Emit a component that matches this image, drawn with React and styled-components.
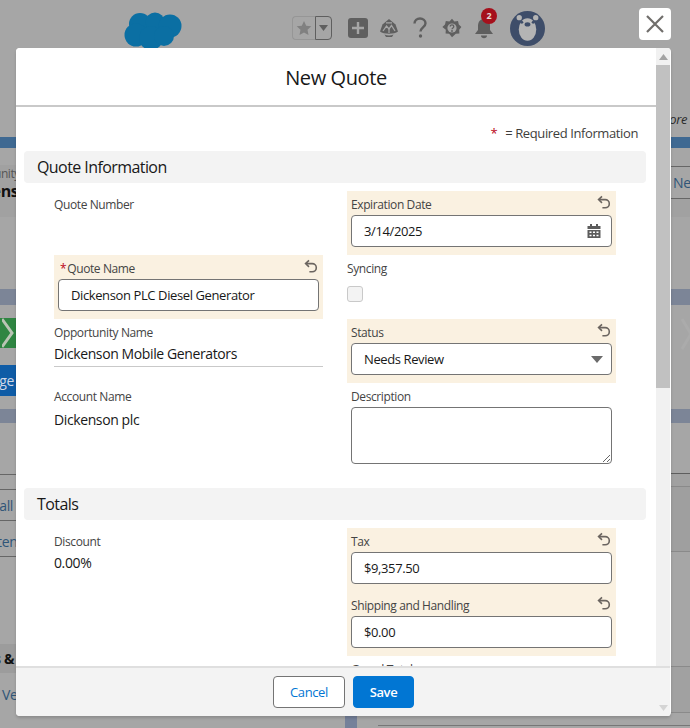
import React from "react";
import styled, { createGlobalStyle } from "styled-components";

const GlobalStyle = createGlobalStyle`
  html, body {
    margin: 0;
    padding: 0;
    height: 100%;
    overflow: hidden;
    font-family: "Open Sans", "Noto Sans", Arial, sans-serif;
    font-size: 13px;
    letter-spacing: -0.03em;
    color: #181818;
  }
  * {
    box-sizing: border-box;
  }
`;

const Page = styled.div`
  position: relative;
  width: 690px;
  height: 728px;
  overflow: hidden;
  background: #a6a6a6;
  display: flex;
  flex-direction: column;
`;

const TopBar = styled.header`
  height: 137px;
  display: flex;
  align-items: flex-start;
  padding: 10px 3px 0 124px;
`;

const LogoMark = styled.svg`
  width: 58px;
  height: 42px;
  flex: none;
`;

const Tools = styled.div`
  display: flex;
  align-items: center;
  margin-left: 110px;
  height: 36px;
`;

const FavoriteGroup = styled.div`
  display: flex;
  width: 40px;
  height: 24px;
  margin-right: 16px;
`;

const FavoriteStar = styled.div`
  width: 23px;
  display: flex;
  align-items: center;
  justify-content: center;
  border: 1px solid #969696;
  border-right: none;
  border-radius: 4px 0 0 4px;
`;

const FavoriteCaret = styled.div`
  width: 17px;
  display: flex;
  align-items: center;
  justify-content: center;
  border: 1px solid #5f5f5f;
  border-radius: 0 4px 4px 0;
`;

const ToolIcon = styled.svg`
  flex: none;
  margin-right: ${(p) => p.$gap}px;
`;

const BellWrap = styled.div`
  position: relative;
  width: 22px;
  height: 24px;
  margin-right: 15px;
`;

const Badge = styled.span`
  position: absolute;
  top: -8px;
  left: 8px;
  width: 16px;
  height: 16px;
  border-radius: 50%;
  background: #a5101c;
  color: #e6d6d6;
  font-size: 9px;
  font-weight: 700;
  line-height: 16px;
  text-align: center;
`;

const MoreLink = styled.span`
  margin-left: auto;
  margin-top: 100px;
  font-style: italic;
  color: #2b2b2b;
  font-size: 13px;
`;

const BlueStrip = styled.div`
  height: 11px;
  flex: none;
  background: #3f6992;
`;

const Columns = styled.div`
  flex: 1;
  display: flex;
  justify-content: space-between;
  min-height: 0;
`;

const Rail = styled.div`
  width: ${(p) => p.$width}px;
  display: flex;
  flex-direction: column;
  overflow: hidden;
`;

const Band = styled.div`
  flex: none;
  height: ${(p) => p.$h}px;
  background: ${(p) => p.$bg || "transparent"};
  border-bottom: ${(p) => (p.$line ? `1px solid ${p.$line}` : "none")};
  color: ${(p) => p.$color || "#2f5578"};
  font-weight: ${(p) => p.$weight || 400};
  font-size: ${(p) => p.$size || 14}px;
  line-height: ${(p) => p.$h}px;
  white-space: nowrap;
  display: flex;
  justify-content: ${(p) => (p.$start ? "flex-start" : "flex-end")};
  padding: ${(p) => (p.$start ? "0 0 0 2px" : `0 ${p.$pr || 0}px 0 0`)};
  overflow: hidden;
`;

const Chevron = styled.svg`
  flex: none;
  width: 19px;
  height: ${(p) => p.$h}px;
`;

const BottomStrip = styled.div`
  flex: none;
  height: 12px;
  display: flex;
  overflow: hidden;
`;

const CutOffText = styled.div`
  width: 345px;
  padding: 7px 0 0 5px;
  font-size: 14px;
  color: #222;
  white-space: nowrap;
`;

const Divider = styled.div`
  width: 12px;
  background: #75819a;
`;

const BottomRule = styled.div`
  flex: 1;
  margin: 9px 0 0 21px;
  border-top: 1px solid #777;
`;

const CloseButton = styled.button`
  position: absolute;
  top: 8px;
  left: 639px;
  width: 32px;
  height: 32px;
  padding: 0;
  border: none;
  border-radius: 4px;
  background: #fff;
  display: flex;
  align-items: center;
  justify-content: center;
`;

const Modal = styled.div`
  position: absolute;
  top: 48px;
  left: 16px;
  width: 655px;
  height: 668px;
  padding-right: 1px;
  border-radius: 4px;
  background: #fff;
  box-shadow: 0 2px 3px rgba(0, 0, 0, 0.16);
  overflow: hidden;
  display: flex;
`;

const Pane = styled.div`
  width: 640px;
  flex: none;
  display: flex;
  flex-direction: column;
`;

const ScrollTrack = styled.div`
  flex: 1;
  display: flex;
  flex-direction: column;
  background: #f1f1f1;
`;

const ScrollButton = styled.div`
  height: 17px;
  flex: none;
  display: flex;
  align-items: center;
  justify-content: center;
`;

const ScrollThumb = styled.div`
  height: 323px;
  flex: none;
  background: #c1c1c1;
`;

const ScrollFoot = styled.div`
  margin-top: auto;
  height: 50px;
  flex: none;
  display: flex;
  flex-direction: column;
  justify-content: flex-end;
  background: #f3f3f3;
  border-top: 2px solid #dfdfdf;
`;

const ModalHeader = styled.div`
  height: 59px;
  flex: none;
  background: #fff;
  border-bottom: 2px solid #c9c9c9;
  text-align: center;
  font-size: 20px;
  line-height: 59px;
`;

const ModalBody = styled.div`
  flex: 1;
  min-height: 0;
  overflow: hidden;
  padding: 16px 10px 0 8px;
`;

const RequiredNote = styled.div`
  height: 28px;
  padding-right: 8px;
  text-align: right;
  line-height: 20px;
  color: #3e3e3c;
`;

const Star = styled.span`
  color: #ba0517;
  margin-right: ${(p) => p.$gap || 1}px;
`;

const SectionTitle = styled.h3`
  margin: 0 0 8px;
  height: 32px;
  padding-left: 13px;
  border-radius: 4px;
  background: #f3f3f3;
  font-size: 16px;
  font-weight: 400;
  letter-spacing: -0.036em;
  line-height: 32px;
`;

const FieldGrid = styled.div`
  display: grid;
  grid-template-columns: 269px 269px;
  column-gap: 24px;
  padding-left: 30px;
  margin-bottom: ${(p) => p.$mb || 0}px;
`;

const Field = styled.div`
  min-height: 64px;
  position: relative;
  padding: ${(p) => (p.$edited ? "0 4px 8px" : "0 4px")};
  background: ${(p) => (p.$edited ? "#faf1e1" : "transparent")};
`;

const PlainField = styled.div`
  min-height: 64px;
`;

const Label = styled.div`
  height: 24px;
  font-size: 12px;
  line-height: 27px;
  color: #444;
  padding-left: ${(p) => p.$indent || 0}px;
`;

const UndoIcon = styled.svg`
  position: absolute;
  top: 4px;
  right: 4px;
  width: 16px;
  height: 16px;
`;

const Value = styled.div`
  height: ${(p) => (p.$underline ? 24 : 27)}px;
  line-height: ${(p) => p.$lh || 22}px;
  font-size: 14px;
  color: #181818;
  border-bottom: ${(p) => (p.$underline ? "1px solid #c9c9c9" : "none")};
`;

const InputBox = styled.div`
  position: relative;
  height: 32px;
`;

const TextInput = styled.input`
  width: 100%;
  height: 32px;
  padding: 0 12px;
  border: 1px solid #747474;
  border-radius: 4px;
  background: #fff;
  font: inherit;
  font-size: 13px;
  letter-spacing: inherit;
  color: #181818;
  outline: none;
`;

const CalendarIcon = styled.svg`
  position: absolute;
  top: 9px;
  right: 11px;
`;

const CaretIcon = styled.svg`
  position: absolute;
  top: 13px;
  right: 9px;
`;

const Check = styled.div`
  width: 16px;
  height: 16px;
  margin-top: 7px;
  border: 1px solid #c9c9c9;
  border-radius: 3px;
  background: #f3f3f3;
`;

const TextArea = styled.textarea`
  display: block;
  width: 100%;
  height: 57px;
  padding: 6px 12px;
  border: 1px solid #747474;
  border-radius: 4px;
  font: inherit;
  outline: none;
`;

const ModalFooter = styled.div`
  flex: none;
  height: 50px;
  padding: 8px 0 0 15px;
  display: flex;
  justify-content: center;
  gap: 8px;
  background: #f3f3f3;
  border-top: 2px solid #dfdfdf;
`;

const Button = styled.button`
  height: 32px;
  width: ${(p) => p.$width}px;
  padding: 0;
  border-radius: 4px;
  border: 1px solid ${(p) => (p.$primary ? "#0176d3" : "#747474")};
  background: ${(p) => (p.$primary ? "#0176d3" : "#fff")};
  color: ${(p) => (p.$primary ? "#fff" : "#0176d3")};
  font-family: inherit;
  font-size: 13px;
  letter-spacing: inherit;
  font-weight: ${(p) => (p.$primary ? 600 : 400)};
`;

function Undo() {
  return (
    <UndoIcon viewBox="0 0 16 16" fill="none" stroke="#6b6560" strokeWidth="1.6">
      <path d="M3 4.6h6.2a4 4 0 0 1 0 8.2H6.4" />
      <path d="M6 1.4 2.6 4.6 6 7.8" />
    </UndoIcon>
  );
}

function EditedField({ label, value, required, children }) {
  return (
    <Field $edited>
      <Label $indent={required ? 2 : 0}>
        {required && <Star>*</Star>}
        {label}
      </Label>
      <Undo />
      <InputBox>
        <TextInput readOnly value={value} />
        {children}
      </InputBox>
    </Field>
  );
}

function TrailIcon() {
  return (
    <ToolIcon width="20" height="20" viewBox="0 0 20 20" $gap={14}>
      <path d="M10 1 3.5 6.5 1 13.5c2 1.6 5 2.2 9 2.2s7-.6 9-2.2l-2.5-7Z" fill="#5f5f5f" />
      <path d="M4 13l3.5-5 2.5 3 2.5-3.5L16 13" fill="none" stroke="#a6a6a6" strokeWidth="1.3" />
      <path d="M10 11v4M7 4.8h6" stroke="#a6a6a6" strokeWidth="1.2" />
      <path d="M5.5 16.5c2.8 1.4 6.2 1.4 9 0L13 19H7Z" fill="#5f5f5f" />
    </ToolIcon>
  );
}

function GearIcon() {
  return (
    <ToolIcon width="20" height="20" viewBox="0 0 20 20" $gap={11}>
      <path
        d="M10 .8l2.4 2.8 3.6-.6.8 3.5 2.6 2.4-2.2 2.9.2 3.6-3.6.4-3.8 3.4-2.8-3.4-3.6-.4.2-3.6L.4 8.9 3 6.5 3.8 3l3.6.6Z"
        fill="#5f5f5f"
      />
      <circle cx="10" cy="10" r="4.6" fill="#a6a6a6" />
      <path d="M8.2 8.6c0-2.2 3.6-2.2 3.6 0 0 1.4-1.8 1.3-1.8 2.7" fill="none" stroke="#5f5f5f" strokeWidth="1.3" />
      <circle cx="10" cy="13" r=".9" fill="#5f5f5f" />
    </ToolIcon>
  );
}

export default function App() {
  return (
    <>
      <GlobalStyle />
      <Page>
        <TopBar>
          <LogoMark viewBox="0 0 58 42">
            <g fill="#0b6fa3">
              <circle cx="16" cy="14" r="11" />
              <circle cx="31" cy="12" r="9.5" />
              <circle cx="46" cy="16" r="11.5" />
              <circle cx="12" cy="25" r="11.5" />
              <circle cx="27" cy="28" r="12" />
              <circle cx="40" cy="26" r="10" />
            </g>
          </LogoMark>
          <Tools>
            <FavoriteGroup>
              <FavoriteStar>
                <svg width="16" height="16" viewBox="0 0 16 16">
                  <path d="M8 1l2.2 4.7 5.1.6-3.8 3.5 1 5.1L8 12.4l-4.5 2.5 1-5.1L.7 6.3l5.1-.6Z" fill="#808080" />
                </svg>
              </FavoriteStar>
              <FavoriteCaret>
                <svg width="9" height="6" viewBox="0 0 9 6">
                  <path d="M0 0h9L4.5 6Z" fill="#5f5f5f" />
                </svg>
              </FavoriteCaret>
            </FavoriteGroup>
            <ToolIcon width="20" height="20" viewBox="0 0 20 20" $gap={11}>
              <rect width="20" height="20" rx="3" fill="#5f5f5f" />
              <path d="M10 4v12M4 10h12" stroke="#a6a6a6" strokeWidth="2.4" />
            </ToolIcon>
            <TrailIcon />
            <ToolIcon width="14" height="22" viewBox="0 0 14 22" $gap={15}>
              <path d="M1.5 6.5C1.5 3.5 4 1.5 7 1.5s5.5 2 5.5 4.8c0 4-5 4.2-5 8.2" fill="none" stroke="#5f5f5f" strokeWidth="2.4" />
              <circle cx="7.5" cy="19" r="1.7" fill="#5f5f5f" />
            </ToolIcon>
            <GearIcon />
            <BellWrap>
              <svg width="22" height="24" viewBox="0 0 22 24">
                <path d="M11 3c-4 0-6 3-6 7v4l-3 4h18l-3-4v-4c0-4-2-7-6-7Z" fill="#5f5f5f" />
                <path d="M8 19.5h6c0 1.8-1.3 2.8-3 2.8s-3-1-3-2.8Z" fill="#5f5f5f" />
              </svg>
              <Badge>2</Badge>
            </BellWrap>
            <svg width="35" height="35" viewBox="0 0 34 34">
              <circle cx="17" cy="17" r="17" fill="#3e4d69" />
              <circle cx="9" cy="6.5" r="2.6" fill="#b4b4b4" />
              <circle cx="25" cy="6.5" r="2.6" fill="#b4b4b4" />
              <ellipse cx="17" cy="18" rx="8.5" ry="11" fill="#b4b4b4" />
              <circle cx="11.5" cy="11" r="1.4" fill="#3e4d69" />
              <circle cx="22.5" cy="11" r="1.4" fill="#3e4d69" />
              <ellipse cx="17" cy="13" rx="2.8" ry="2" fill="#3e4d69" />
            </svg>
          </Tools>
          <MoreLink>ore</MoreLink>
        </TopBar>
        <BlueStrip />
        <Columns>
          <Rail $width={40}>
            <Band $h={17} />
            <Band $h={17} $bg="#a1a1a1" $color="#555" $size={12} $pr={20}>Opportunity</Band>
            <Band $h={18} $bg="#a1a1a1" $color="#111" $weight={700} $size={16} $pr={2}>Dickenson</Band>
            <Band $h={17} $bg="#a1a1a1" />
            <Band $h={72} />
            <Band $h={16} $bg="#7c8597" />
            <Band $h={13} />
            <Band $h={30} $bg="#2f8542" $start>
              <Chevron $h={30} viewBox="0 0 19 30" fill="none" stroke="#b9c4b4" strokeWidth="3">
                <path d="M0 1 10 15 0 29" />
              </Chevron>
            </Band>
            <Band $h={17} />
            <Band $h={31} $bg="#0f5ca6" $color="#cfd8e6" $pr={26}>Manage</Band>
            <Band $h={13} />
            <Band $h={14} $bg="#7c8597" />
            <Band $h={52} $line="#666" />
            <Band $h={15} $line="#666" />
            <Band $h={31} $line="#666" $pr={27}>View all</Band>
            <Band $h={5} />
            <Band $h={31} $line="#666" $pr={18}>Content</Band>
            <Band $h={87} />
            <Band $h={29} $bg="#9c9c9c" $color="#111" $weight={700} $pr={26}>Notes &amp;</Band>
            <Band $h={43} $start>Ve</Band>
          </Rail>
          <Rail $width={19}>
            <Band $h={19} $line="#666" />
            <Band $h={32} $line="#666" $start>New</Band>
            <Band $h={18} $bg="#a1a1a1" />
            <Band $h={72} />
            <Band $h={16} $bg="#7c8597" />
            <Band $h={13} />
            <Band $h={32} $start>
              <Chevron $h={32} viewBox="0 0 19 32" fill="none" stroke="#ababab" strokeWidth="3">
                <path d="M9 1 18 16 9 31" />
              </Chevron>
            </Band>
            <Band $h={59} />
            <Band $h={14} $bg="#7c8597" />
            <Band $h={51} $line="#5e5e5e" />
            <Band $h={13} $line="#8a8a8a" $bg="#a1a1a1" />
            <Band $h={65} $line="#8a8a8a" $bg="#9f9f9f" />
            <Band $h={115} $line="#8a8a8a" />
            <Band $h={46} $line="#8a8a8a" $bg="#a1a1a1" />
          </Rail>
        </Columns>
        <BottomStrip>
          <CutOffText>Items to approve</CutOffText>
          <Divider />
          <BottomRule />
        </BottomStrip>

        <CloseButton aria-label="Close">
          <svg width="20" height="20" viewBox="0 0 20 20">
            <path d="M2 2l16 16M18 2 2 18" stroke="#706e6b" strokeWidth="2.2" />
          </svg>
        </CloseButton>

        <Modal>
          <Pane>
            <ModalHeader>New Quote</ModalHeader>
            <ModalBody>
              <RequiredNote>
                <Star $gap={5}>*</Star> = Required Information
              </RequiredNote>
              <SectionTitle>Quote Information</SectionTitle>
              <FieldGrid $mb={24}>
                <PlainField>
                  <Label>Quote Number</Label>
                </PlainField>
                <EditedField label="Expiration Date" value="3/14/2025">
                  <CalendarIcon width="14" height="14" viewBox="0 0 14 14">
                    <path d="M3 0h2v2h4V0h2v2h2.5v3H.5V2H3Z" fill="#5c5c5c" />
                    <path
                      d="M.5 6h13v8H.5Z M2.5 7.5v1.5h2V7.5Z M6 7.5v1.5h2V7.5Z M9.5 7.5v1.5h2V7.5Z M2.5 10.8v1.5h2v-1.5Z M6 10.8v1.5h2v-1.5Z M9.5 10.8v1.5h2v-1.5Z"
                      fill="#5c5c5c"
                      fillRule="evenodd"
                    />
                  </CalendarIcon>
                </EditedField>
                <EditedField label="Quote Name" value="Dickenson PLC Diesel Generator" required />
                <PlainField>
                  <Label>Syncing</Label>
                  <Check />
                </PlainField>
                <PlainField>
                  <Label>Opportunity Name</Label>
                  <Value $underline>Dickenson Mobile Generators</Value>
                </PlainField>
                <EditedField label="Status" value="Needs Review">
                  <CaretIcon width="12" height="7" viewBox="0 0 12 7">
                    <path d="M0 0h12L6 7Z" fill="#6b6b6b" />
                  </CaretIcon>
                </EditedField>
                <PlainField>
                  <Label>Account Name</Label>
                  <Value $lh={26}>Dickenson plc</Value>
                </PlainField>
                <Field>
                  <Label>Description</Label>
                  <TextArea />
                </Field>
              </FieldGrid>
              <SectionTitle>Totals</SectionTitle>
              <FieldGrid>
                <PlainField>
                  <Label>Discount</Label>
                  <Value>0.00%</Value>
                </PlainField>
                <EditedField label="Tax" value="$9,357.50" />
                <PlainField />
                <EditedField label="Shipping and Handling" value="$0.00" />
                <PlainField />
                <Field>
                  <Label>Grand Total</Label>
                </Field>
              </FieldGrid>
            </ModalBody>
            <ModalFooter>
              <Button $width={72}>Cancel</Button>
              <Button $primary $width={61}>Save</Button>
            </ModalFooter>
          </Pane>
          <ScrollTrack>
            <ScrollButton>
              <svg width="9" height="6" viewBox="0 0 9 6">
                <path d="M4.5 0 9 6H0Z" fill="#a3a3a3" />
              </svg>
            </ScrollButton>
            <ScrollThumb />
            <ScrollFoot>
              <ScrollButton>
                <svg width="9" height="6" viewBox="0 0 9 6">
                  <path d="M0 0h9L4.5 6Z" fill="#d4d4d4" />
                </svg>
              </ScrollButton>
            </ScrollFoot>
          </ScrollTrack>
        </Modal>
      </Page>
    </>
  );
}
